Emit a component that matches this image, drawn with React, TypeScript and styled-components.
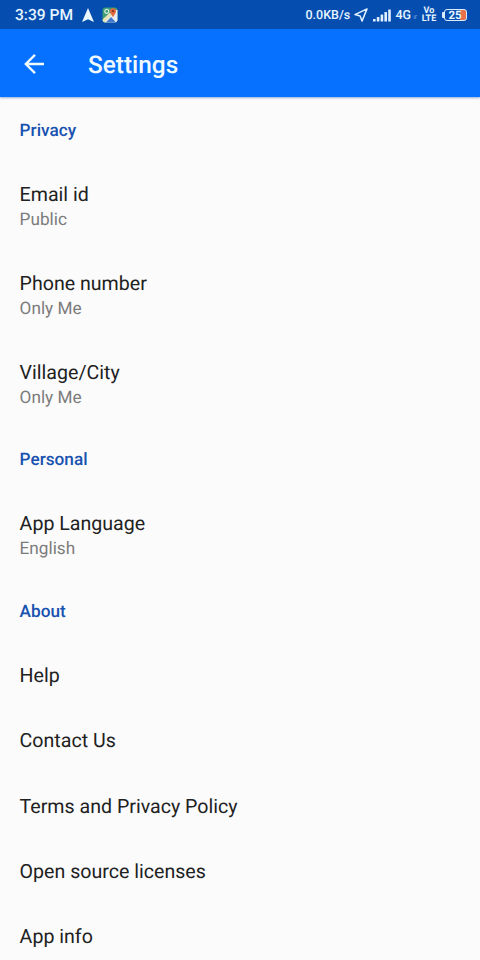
import React from "react";
import styled, { createGlobalStyle } from "styled-components";

const GlobalStyle = createGlobalStyle`
  body { margin: 0; background: #fbfbfb; font-family: Roboto, sans-serif; text-rendering: geometricPrecision; }
  * { box-sizing: border-box; }
`;

const Screen = styled.div`
  width: 480px;
  height: 960px;
  overflow: hidden;
  background: #fbfbfb;
`;

const StatusBar = styled.header`
  height: 29px;
  padding: 1px 13.5px 0 15px;
  display: flex;
  align-items: center;
  justify-content: space-between;
  background: #054eb0;
  color: #e6f5ff;
`;

const StatusGroup = styled.div<{ $gap: number }>`
  display: flex;
  align-items: center;
  gap: ${({ $gap }) => $gap}px;
`;

const StatusText = styled.span<{ $size: number; $width?: number }>`
  width: ${({ $width }) => ($width ? `${$width}px` : "auto")};
  font-size: ${({ $size }) => $size}px;
  font-weight: 500;
  line-height: 21px;
  white-space: nowrap;
`;

const Network = styled.div`
  width: 22px;
  margin-left: 1px;
  display: flex;
  align-items: baseline;
  gap: 2px;
`;

const Roaming = styled.span`
  font-size: 7px;
  line-height: 8px;
  color: #6d9fe2;
`;

const Volte = styled.div`
  width: 16px;
  display: flex;
  flex-direction: column;
  align-items: center;
  font-size: 9px;
  font-weight: 700;
  line-height: 8px;
`;

const VolteLine = styled.span`
  height: 8px;
`;

const Battery = styled.div`
  margin-left: 1px;
  display: flex;
  align-items: center;
`;

const BatteryTip = styled.div`
  width: 2px;
  height: 6px;
  border-radius: 1px 0 0 1px;
  background: #dcecff;
`;

const BatteryCell = styled.div`
  width: 23px;
  height: 12px;
  border: 1.5px solid #dcecff;
  border-radius: 3px;
  display: flex;
  align-items: center;
  justify-content: center;
  background: linear-gradient(90deg, #054eb0 72%, #e8714a 72%);
  font-size: 11.5px;
  font-weight: 700;
  line-height: 10px;
`;

const AppBar = styled.div`
  height: 68px;
  padding: 3px 20px 0;
  display: flex;
  align-items: center;
  background: #0671ff;
  box-shadow: 0 1px 2px rgba(60, 110, 190, 0.55);
  color: #effaff;
`;

const BackButton = styled.button`
  width: 68px;
  height: 40px;
  padding: 0 0 2px;
  border: 0;
  background: none;
  color: inherit;
  display: flex;
  align-items: center;
`;

const Title = styled.h1`
  margin: 0;
  font-size: 24.4px;
  font-weight: 500;
  line-height: 30px;
`;

const List = styled.main`
  padding-top: 1.8px;
`;

const SectionHeader = styled.h2`
  height: 63px;
  margin: 0;
  padding: 21.8px 19.6px 0;
  color: #1852b0;
  font-size: 17.2px;
  font-weight: 500;
  line-height: 20px;
`;

const Row = styled.div<{ $tall: boolean }>`
  height: ${({ $tall }) => ($tall ? 88.8 : 65.3)}px;
  padding: 21.2px 19.6px 0;
`;

const RowTitle = styled.div`
  color: #212121;
  font-size: 19.6px;
  line-height: 23px;
`;

const RowValue = styled.div`
  margin-top: 4px;
  color: #7c7c7c;
  font-size: 17.2px;
  line-height: 20px;
`;

const sections: { name: string; items: { title: string; value?: string }[] }[] = [
  {
    name: "Privacy",
    items: [
      { title: "Email id", value: "Public" },
      { title: "Phone number", value: "Only Me" },
      { title: "Village/City", value: "Only Me" },
    ],
  },
  { name: "Personal", items: [{ title: "App Language", value: "English" }] },
  {
    name: "About",
    items: [
      { title: "Help" },
      { title: "Contact Us" },
      { title: "Terms and Privacy Policy" },
      { title: "Open source licenses" },
      { title: "App info" },
    ],
  },
];

const NavigationIcon = () => (
  <svg width="12" height="14" viewBox="0 0 12 14">
    <path d="M6 0 L12 14 L6 11.2 L0 14 Z" fill="#eaf8ff" />
  </svg>
);

const MapsIcon = () => (
  <svg width="16" height="16" viewBox="0 0 16 16">
    <defs>
      <clipPath id="tile">
        <rect x="0.5" y="0.5" width="15" height="15" rx="3" />
      </clipPath>
    </defs>
    <g clipPath="url(#tile)">
      <rect width="16" height="16" fill="#3f9c74" />
      <path d="M0 16 L8 8 L11 3 L16 3 V16 Z" fill="#e9edf2" />
      <path d="M3.5 16 L9 10 L14.5 16 Z" fill="#3f78cc" />
      <path d="M0 13 L8 5.5 L10 8 L2 16 H0 Z" fill="#e8e3b8" />
      <circle cx="4.8" cy="4.3" r="2" fill="none" stroke="#cfe9de" strokeWidth="1.2" />
    </g>
    <path d="M11 10.5 C10.6 8.2 8 7 8 4.2 A3 3 0 0 1 14 4.2 C14 7 11.4 8.2 11 10.5 Z" fill="#e06a3c" />
    <circle cx="11" cy="4.1" r="1.1" fill="#8a2f26" />
  </svg>
);

const LocationIcon = () => (
  <svg width="14" height="14" viewBox="0 0 14 14">
    <path d="M13 0.9 L1 6.6 L6.1 7.9 L8 13.1 Z" fill="none" stroke="#e1f1ff" strokeWidth="1.5" strokeLinejoin="round" />
  </svg>
);

const SignalIcon = () => (
  <svg width="18" height="13" viewBox="0 0 18 13" fill="#e1f1ff">
    <rect x="0" y="10" width="2.6" height="2.5" rx="0.5" />
    <rect x="3.8" y="8" width="2.6" height="4.5" rx="0.5" />
    <rect x="7.6" y="5.5" width="2.6" height="7" rx="0.5" />
    <rect x="11.4" y="3" width="2.6" height="9.5" rx="0.5" />
    <rect x="15.2" y="0.5" width="2.6" height="12" rx="0.5" />
  </svg>
);

const BackIcon = () => (
  <svg width="28" height="28" viewBox="0 0 28 28" fill="none" stroke="currentColor" strokeWidth="2.4">
    <path d="M24 14 H6 M15 4.8 L5.8 14 L15 23.2" />
  </svg>
);

export default function App() {
  return (
    <Screen>
      <GlobalStyle />
      <StatusBar>
        <StatusGroup $gap={8.5}>
          <StatusText $size={15.6}>3:39 PM</StatusText>
          <NavigationIcon />
          <MapsIcon />
        </StatusGroup>
        <StatusGroup $gap={3.5}>
          <StatusText $size={12.5} $width={44.5}>0.0KB/s</StatusText>
          <StatusGroup $gap={5.5}>
            <LocationIcon />
            <SignalIcon />
          </StatusGroup>
          <Network>
            <StatusText $size={12.5}>4G</StatusText>
            <Roaming>ır</Roaming>
          </Network>
          <Volte>
            <VolteLine>Vo</VolteLine>
            <VolteLine>LTE</VolteLine>
          </Volte>
          <Battery>
            <BatteryTip />
            <BatteryCell>25</BatteryCell>
          </Battery>
        </StatusGroup>
      </StatusBar>
      <AppBar>
        <BackButton aria-label="Back">
          <BackIcon />
        </BackButton>
        <Title>Settings</Title>
      </AppBar>
      <List>
        {sections.map((section) => (
          <section key={section.name}>
            <SectionHeader>{section.name}</SectionHeader>
            {section.items.map((item) => (
              <Row key={item.title} $tall={Boolean(item.value)}>
                <RowTitle>{item.title}</RowTitle>
                {item.value && <RowValue>{item.value}</RowValue>}
              </Row>
            ))}
          </section>
        ))}
      </List>
    </Screen>
  );
}
